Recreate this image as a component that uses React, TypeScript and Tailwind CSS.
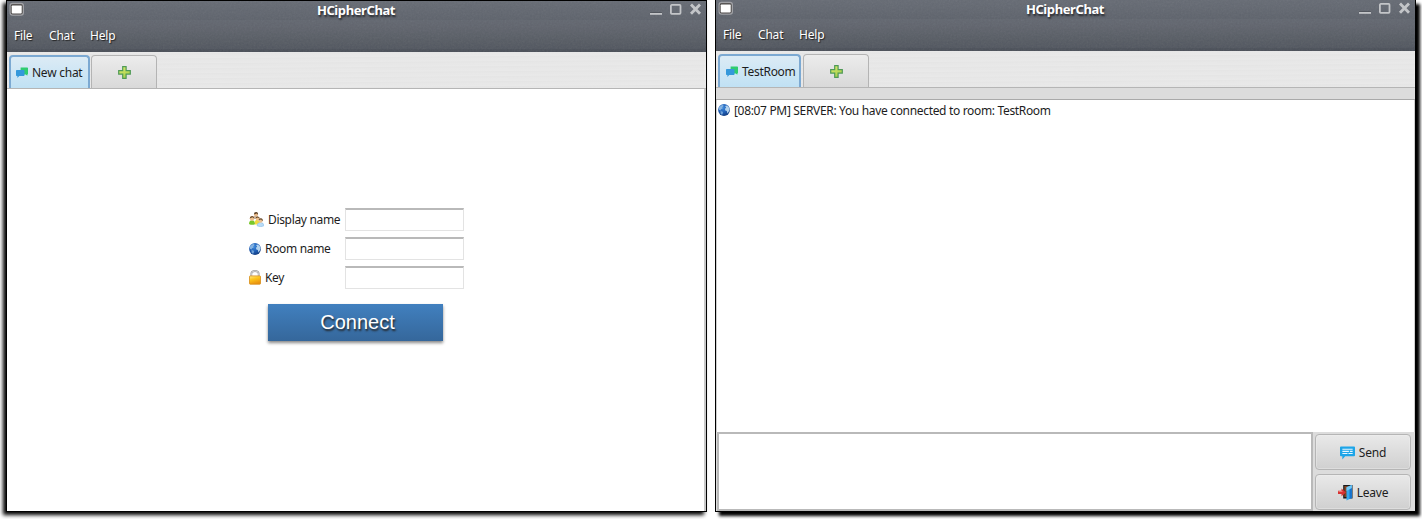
import type { ReactNode } from "react";

const UI = "font-['Noto_Sans','Open_Sans',sans-serif]";

function WindowIcon() {
  return (
    <svg width="16" height="14" viewBox="0 0 16 14" className="block">
      <rect x="0.5" y="0.7" width="14.500" height="13" rx="3" fill="#a0a1a5" />
      <rect x="1.7" y="2" width="12" height="10.500" rx="2" fill="#4c4948" />
      <rect x="2.7" y="3.500" width="10" height="8" rx="0.8" fill="#fff" />
      <path d="M3 3.300h9.500" stroke="#a5a5a5" strokeWidth="0.7" />
    </svg>
  );
}

function WindowControls() {
  return (
    <svg width="54" height="14" viewBox="0 0 54 14" className="block">
      <g fill="none" stroke="#31353b" transform="translate(0 -1)" opacity="0.7">
        <path d="M1 13h12M21.5 4.5h9" strokeWidth="1" />
      </g>
      <g fill="none" stroke="#c3c5c8">
        <path d="M1 12.9h12" strokeWidth="1.8" />
        <rect x="21.9" y="3.9" width="9.6" height="9" rx="0.8" strokeWidth="1.8" />
        <path d="M42 3.6l9 9.2M51 3.6l-9 9.2" strokeWidth="2.8" />
      </g>
    </svg>
  );
}

function ChatIcon() {
  return (
    <svg width="12" height="12" viewBox="0 0 13 12" className="block shrink-0">
      <path d="M5 0h7.2q.8 0 .8.8v6q0 .7-.7.7V9L10.500 7.500H5z" fill="#2ecc71" />
      <path d="M.8 2.800h7.600q.8 0 .8.8v4.800q0 .8-.8.8H3.500L1.500 11.500V9.200H.8Q0 9.200 0 8.400V3.600q0-.8.8-.8z" fill="#3498db" />
    </svg>
  );
}

function PlusIcon() {
  return (
    <svg width="13" height="13" viewBox="0 0 13 13" className="block">
      <defs>
        <linearGradient id="plus" x1="0" y1="0" x2="0.6" y2="1">
          <stop offset="0" stopColor="#e2ee71" />
          <stop offset="1" stopColor="#a5cf4a" />
        </linearGradient>
      </defs>
      <path d="M4.700.700h3.400v4h4.200v3.400H8.100v4.200H4.700V8.100H.700V4.700h4z" fill="url(#plus)" stroke="#4f9a57" strokeWidth="1.200" />
    </svg>
  );
}

function GlobeIcon() {
  return (
    <svg width="12" height="12" viewBox="0 0 12 12" className="block shrink-0">
      <defs>
        <radialGradient id="globe" cx="0.4" cy="0.3" r="0.75">
          <stop offset="0" stopColor="#3f8bdc" />
          <stop offset="0.55" stopColor="#1f5db4" />
          <stop offset="1" stopColor="#123a7c" />
        </radialGradient>
      </defs>
      <circle cx="6" cy="6" r="5.900" fill="url(#globe)" />
      <path d="M1 3.600L3 1.500l2-.5.500 1-1.300 1.500.500 1-1.700.8-.5 1.300L1 5.800z" fill="#86b3e0" />
      <path d="M2.500 7l2 .4.600 1.400L4 11 2.700 9.500z" fill="#6fa2d8" />
      <path d="M7 2l2-.5 2 2 .6 2-.8 2-1.300 2-.7-2.500L7 6.200 7.200 4.500 8.200 3.500z" fill="#b3d2ec" />
    </svg>
  );
}

function PeopleIcon() {
  return (
    <svg width="15" height="15" viewBox="0 0 15 15" className="block shrink-0">
      <path d="M4.500 4.500Q6.500 3 9 4.500L9.500 7h-5z" fill="#c6b5a2" />
      <circle cx="7" cy="2.400" r="2" fill="#eab987" />
      <path d="M4.900 2.500Q5 0 7.200.1 9.400.2 9 2.800L7.800 1.500z" fill="#574029" />
      <path d="M0 12Q0 8.200 3 8.200T6 12.200Q3 13.600 0 12z" fill="#77c72b" />
      <circle cx="3" cy="6.500" r="2.200" fill="#efc18e" />
      <path d="M.7 6.600Q.8 4 3.200 4.100 5.500 4.300 5.200 6.500L3.500 5.200z" fill="#65482d" />
      <path d="M5.800 10.500Q6 7.600 8.200 7.700l3 2.300-1.500 2.500H6z" fill="#f1da3f" />
      <circle cx="8.600" cy="6.600" r="1.900" fill="#f0c28f" />
      <path d="M6.600 6.400Q6.800 4.300 8.900 4.500q2 .2 1.700 2.300L9 5.600z" fill="#6d4a28" />
      <path d="M8 13.800Q8.200 10.500 11.500 10.500t3.400 3.300q-3 1.800-6.900 0z" fill="#b9dcf7" stroke="#84b9e5" strokeWidth="0.5" />
      <circle cx="11.600" cy="8.700" r="2" fill="#edc293" />
      <path d="M9.500 8.500Q9.700 5.800 12 6.200q2.300.4 1.700 3L12 7.500z" fill="#6d5237" />
    </svg>
  );
}

function LockIcon() {
  return (
    <svg width="12" height="15" viewBox="0 0 12 15" className="block shrink-0">
      <defs>
        <linearGradient id="lock" x1="0" y1="0" x2="0.400" y2="1">
          <stop offset="0" stopColor="#ffe98c" />
          <stop offset="0.45" stopColor="#fdc51c" />
          <stop offset="1" stopColor="#ea9411" />
        </linearGradient>
      </defs>
      <path d="M2.300 7V3.800Q2.500 1 6 1t3.700 2.800V7" fill="none" stroke="#9c9c9c" strokeWidth="1.800" />
      <path d="M2.300 7V3.800Q2.500 1 6 1t3.700 2.800V7" fill="none" stroke="#e7e7e7" strokeWidth="0.700" />
      <rect x="0.500" y="5.900" width="11" height="8.300" rx="0.700" fill="url(#lock)" stroke="#d78d19" strokeWidth="0.800" />
    </svg>
  );
}

function SendIcon() {
  return (
    <svg width="15" height="14" viewBox="0 0 16 14" className="block shrink-0">
      <path d="M1 0h14q1 0 1 1v8.500q0 1-1 1H5.500L2.500 14v-3.500H1q-1 0-1-1V1q0-1 1-1z" fill="#1ea5e8" />
      <path d="M2.500 3h11M2.500 5.200h7M10.500 5.200h3M2.500 7.500h5.500M9 7.500h4.500" stroke="#e7f6ff" strokeWidth="1.200" />
    </svg>
  );
}

function LeaveIcon() {
  return (
    <svg width="15" height="17" viewBox="0 0 15 17" className="block shrink-0">
      <rect x="5.200" y="1" width="9.300" height="13.500" fill="#17191c" />
      <path d="M6.300 2h4v11h-4z" fill="#854322" />
      <path d="M8.500 3.300L13.800 1v13l-5.300 2.500z" fill="#34a9ed" />
      <path d="M11.500 2l2.300-1v13l-2.300 1z" fill="#1672ce" />
      <path d="M8.500 3.300L13.800 1v3L8.500 7z" fill="#74caf5" />
      <path d="M0 6.700h3.500V4.500L8 8.400 3.500 12.200V10H0z" fill="#d73232" />
      <path d="M.5 7.500h4" stroke="#f28b83" strokeWidth="0.800" />
    </svg>
  );
}

function HeaderGrain() {
  return (
    <svg className="pointer-events-none absolute inset-0 h-full w-full opacity-[0.09]">
      <filter id="grain">
        <feTurbulence type="fractalNoise" baseFrequency="0.55" numOctaves="2" />
        <feColorMatrix type="saturate" values="0" />
      </filter>
      <rect width="100%" height="100%" filter="url(#grain)" />
    </svg>
  );
}

function Header() {
  return (
    <div className="relative h-[51px] shrink-0 bg-linear-to-b from-[#666b74] via-[#5b6069] to-[#4a4f58] text-white">
      <HeaderGrain />
      <div className="relative flex h-[19px] items-start justify-between">
        <div className="w-[56px] pt-px pl-[2px]">
          <WindowIcon />
        </div>
        <div className="text-[13px] leading-[18px] font-bold tracking-[-0.4px] [text-shadow:1px_2px_2px_#23262b]">HCipherChat</div>
        <div className="mr-[3px]">
          <WindowControls />
        </div>
      </div>
      <div className="relative ml-[2px] flex h-[29px] items-center rounded-[4px] bg-white/[0.03] pt-[3px] pl-[5px] tracking-[-0.2px] [text-shadow:1px_1px_1px_#222]">
        <span className="w-[35px]">File</span>
        <span className="w-[41px]">Chat</span>
        <span>Help</span>
      </div>
    </div>
  );
}

function Tabs({ label, tabClass }: { label: string; tabClass: string }) {
  return (
    <div className="flex h-[37px] shrink-0 items-end border-b border-[#b5b5b5] bg-[repeating-linear-gradient(179.6deg,#e7e7e7_0px,#e9e9e9_2px,#e5e5e5_3px,#e8e8e8_5px)] pl-[2px]">
      <div className={tabClass}>
        <ChatIcon />
        <span>{label}</span>
      </div>
      <div className="flex h-[33px] w-[66px] items-center justify-center rounded-t-[4px] border border-b-0 border-[#b4b4b4] bg-linear-to-b from-[#ececec] to-[#d9d9d9]">
        <PlusIcon />
      </div>
    </div>
  );
}

function Field({ icon, label }: { icon: ReactNode; label: string }) {
  return (
    <label className="flex h-[23px] items-center">
      <span className="flex w-[96px] items-center gap-1 whitespace-nowrap">
        {icon}
        <span>{label}</span>
      </span>
      <input className="h-[23px] w-[119px] border border-t-2 border-[#e3e3e3] border-t-[#b9b9b9] bg-white px-1 outline-none" />
    </label>
  );
}

function ActionButton({ icon, label }: { icon: ReactNode; label: string }) {
  return (
    <button className="flex h-[36px] w-[96px] items-center justify-center gap-1 rounded-[4px] border border-[#b5b5b5] bg-linear-to-b from-[#e9e9e9] to-[#d0d0d0] pt-px tracking-[-0.2px] shadow-[inset_0_0_0_1px_#efefef66]">
      {icon}
      <span>{label}</span>
    </button>
  );
}

export default function App() {
  return (
    <div className={`flex h-[519px] w-[1422px] gap-2 overflow-hidden bg-white pl-[6px] text-[12px] leading-4 tracking-[-0.33px] text-[#1d1d1d] ${UI}`}>
      <section className="flex h-[512px] w-[701px] shrink-0 flex-col border border-black bg-white shadow-[-3px_3px_4px_0px_#000]">
        <Header />
        <Tabs label="New chat" tabClass="mr-px flex h-[33px] w-[81px] items-center gap-1 rounded-t-[4px] border-2 border-b-0 border-[#7ca9d2] bg-linear-to-b from-[#dcebf5] to-[#c0e1f4] pl-[5px] tracking-[-0.25px] whitespace-nowrap" />
        <main className="flex grow flex-col items-start border-r-2 border-[#c8c8c8] pt-[119px] pl-[242px]">
          <form className="flex flex-col gap-[6px]">
            <Field icon={<PeopleIcon />} label="Display name" />
            <Field icon={<GlobeIcon />} label="Room name" />
            <Field icon={<LockIcon />} label="Key" />
          </form>
          <button className="mt-[15px] ml-[19px] flex h-[37px] w-[175px] items-center justify-center bg-linear-to-b from-[#4180bf] to-[#35679b] pb-[2px] pl-[4px] font-['Liberation_Sans',sans-serif] text-[20px] tracking-normal text-white shadow-[0_2px_3px_#888] [text-shadow:1px_2px_2px_#222]">
            Connect
          </button>
        </main>
      </section>

      <section className="flex h-[512px] w-[701px] shrink-0 flex-col border border-black bg-white shadow-[4px_4px_3px_0px_#000]">
        <div className="-mt-px flex flex-col">
          <Header />
          <Tabs label="TestRoom" tabClass="mr-[2px] flex h-[33px] w-[83px] items-center gap-1 rounded-t-[4px] border-2 border-b-0 border-[#7ca9d2] bg-linear-to-b from-[#dcebf5] to-[#c0e1f4] pt-px pl-[6px] tracking-[-0.3px] whitespace-nowrap" />
        </div>
        <div className="h-[12px] shrink-0 border-b border-[#a9a9a9] bg-[#dcdcdc]" />
        <div className="flex grow items-start gap-1 border-r border-l border-[#d0d0d0] pt-[3px] pl-px">
          <span className="pt-px">
            <GlobeIcon />
          </span>
          <span className="whitespace-nowrap">[08:07 PM] SERVER: You have connected to room: TestRoom</span>
        </div>
        <footer className="flex h-[79px] shrink-0 gap-[2px] bg-[#dcdcdc] pl-px">
          <textarea className="h-[79px] w-[596px] resize-none border-2 border-[#b9b9b9] bg-white outline-none" />
          <div className="flex flex-col gap-[4px] pt-[2px]">
            <ActionButton icon={<SendIcon />} label="Send" />
            <ActionButton icon={<LeaveIcon />} label="Leave" />
          </div>
        </footer>
      </section>
    </div>
  );
}
